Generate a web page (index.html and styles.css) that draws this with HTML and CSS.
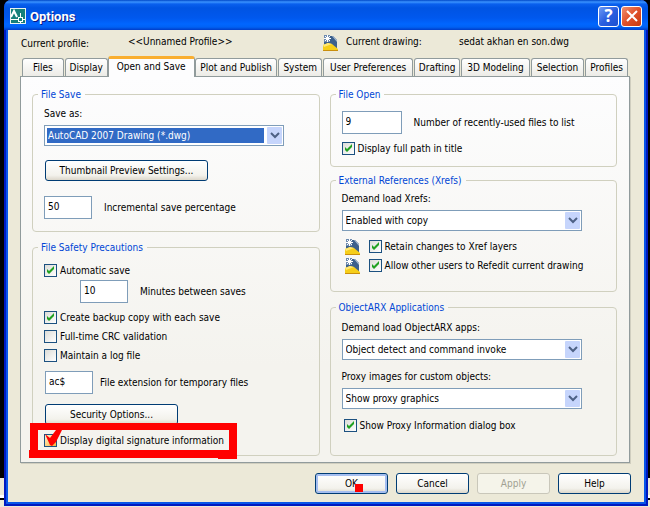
FILE: index.html
```html
<!DOCTYPE html>
<html lang="en">
<head>
<meta charset="utf-8">
<title>Options</title>
<link rel="stylesheet" href="styles.css">
</head>
<body>
<svg class="defs" aria-hidden="true">
  <symbol id="dwg" viewBox="0 0 16 16">
    <path d="M1 1H10L14 5V15H1Z" fill="#3c608c"/>
    <path d="M9 1H10L14 5V7Z" fill="#a9bbd0"/>
    <path d="M1 0H7V7H1Z" fill="#6d8bb0"/>
    <path d="M4.500 0V7M1 3.500H8M2 1L7 6M7 1L2 6" stroke="#fff" stroke-width="1" fill="none"/>
    <path d="M0 10L5 8L9 9L15 14V16H0Z" fill="#f6ce19"/>
    <path d="M0 10L5 8L9 9L1 12Z" fill="#ffe878"/>
    <path d="M0 15H15V16H0Z" fill="#c98e0c"/>
  </symbol>
</svg>
<main class="window">
  <header class="titlebar">
    <svg class="app-icon" viewBox="0 0 16 16" aria-hidden="true">
      <rect width="16" height="16" fill="#e8f2ef"/>
      <rect x="1" y="1" width="14" height="14" fill="#16807a"/>
      <path d="M1 9L4 3L7 9" stroke="#fff" stroke-width="2" fill="none"/>
      <path d="M1 11.5H15M10.500 5V15" stroke="#fff"/>
      <rect x="8.500" y="9.500" width="4" height="4" fill="#16807a" stroke="#fff"/>
    </svg>
    <h1>Options</h1>
    <button class="caption help" aria-label="Help">?</button>
    <button class="caption close" aria-label="Close"><svg viewBox="0 0 12 12"><path d="M1 1L11 11M11 1L1 11" stroke="#fff" stroke-width="2"/></svg></button>
  </header>
  <div class="info">
    <span class="profile-label">Current profile:</span>
    <span class="profile">&lt;&lt;Unnamed Profile&gt;&gt;</span>
    <svg class="dwg"><use href="#dwg"/></svg>
    <span class="drawing-label">Current drawing:</span>
    <span>sedat akhan en son.dwg</span>
  </div>
  <nav class="tabs" role="tablist">
    <button role="tab" class="t-files">Files</button>
    <button role="tab" class="t-display">Display</button>
    <button role="tab" class="t-open active" aria-selected="true">Open and Save</button>
    <button role="tab" class="t-plot">Plot and Publish</button>
    <button role="tab" class="t-system">System</button>
    <button role="tab" class="t-user">User Preferences</button>
    <button role="tab" class="t-draft">Drafting</button>
    <button role="tab" class="t-model">3D Modeling</button>
    <button role="tab" class="t-select">Selection</button>
    <button role="tab" class="t-profiles">Profiles</button>
  </nav>
  <section class="panel" role="tabpanel">
    <div class="column">
      <fieldset class="file-save">
        <legend>File Save</legend>
        <label for="format">Save as:</label>
        <select id="format" class="selected"><option>AutoCAD 2007 Drawing (*.dwg)</option></select>
        <button class="push thumbs">Thumbnail Preview Settings...</button>
        <div class="line"><input id="pct" type="text" value="50"><label for="pct">Incremental save percentage</label></div>
      </fieldset>
      <fieldset class="safety">
        <legend>File Safety Precautions</legend>
        <label class="check"><input type="checkbox" checked>Automatic save</label>
        <div class="line minutes"><input id="min" type="text" value="10"><label for="min">Minutes between saves</label></div>
        <label class="check backup"><input type="checkbox" checked>Create backup copy with each save</label>
        <label class="check"><input type="checkbox">Full-time CRC validation</label>
        <label class="check"><input type="checkbox">Maintain a log file</label>
        <div class="line ext"><input id="ext" type="text" value="ac$"><label for="ext">File extension for temporary files</label></div>
        <button class="push security">Security Options...</button>
        <label class="check signature"><input type="checkbox">Display digital signature information
          <svg class="marker" viewBox="0 0 210 38" aria-hidden="true">
            <path d="M2 1H209V37H190V36H1V28H2ZM10 8V28H201V8Z" fill="#f00" fill-rule="evenodd"/>
            <path d="M17 12L22 16L28 8H34L28 20L24 24L22 23Z" fill="#f00"/>
          </svg>
        </label>
      </fieldset>
    </div>
    <div class="column">
      <fieldset class="file-open">
        <legend>File Open</legend>
        <div class="line recent"><input id="recent" type="text" value="9"><label for="recent">Number of recently-used files to list</label></div>
        <label class="check"><input type="checkbox" checked>Display full path in title</label>
      </fieldset>
      <fieldset class="xrefs">
        <legend>External References (Xrefs)</legend>
        <label for="xref">Demand load Xrefs:</label>
        <select id="xref"><option>Enabled with copy</option></select>
        <div class="marked"><svg class="dwg"><use href="#dwg"/></svg><label class="check"><input type="checkbox" checked>Retain changes to Xref layers</label></div>
        <div class="marked"><svg class="dwg"><use href="#dwg"/></svg><label class="check"><input type="checkbox" checked>Allow other users to Refedit current drawing</label></div>
      </fieldset>
      <fieldset class="arx">
        <legend>ObjectARX Applications</legend>
        <label for="arx">Demand load ObjectARX apps:</label>
        <select id="arx"><option>Object detect and command invoke</option></select>
        <label for="proxy" class="proxy-label">Proxy images for custom objects:</label>
        <select id="proxy"><option>Show proxy graphics</option></select>
        <label class="check proxy-info"><input type="checkbox" checked>Show Proxy Information dialog box</label>
      </fieldset>
    </div>
  </section>
  <footer class="actions">
    <button class="push default">OK<span class="dot"></span></button>
    <button class="push">Cancel</button>
    <button class="push" disabled>Apply</button>
    <button class="push">Help</button>
  </footer>
</main>
</body>
</html>
```
FILE: styles.css
```css
* { box-sizing: border-box; }
html { background: #000; }
body {
  margin: 0;
  min-height: 100vh;
  padding: 0 2px 2px 4px;
  background: linear-gradient(#000 0 478px, #ece9d8 478px 495px, #fff 495px 498px, #000 498px 500px, #ece9d8 500px);
  font: 10px/14px "DejaVu Sans Condensed", "DejaVu Sans", sans-serif;
  color: #000;
}
button, input, select { font: inherit; color: inherit; margin: 0; }
.defs { position: absolute; width: 0; height: 0; }
.window {
  padding: 0 2px 2px;
  background: #ece9d8;
  border: 2px solid #0019c0;
  border-top: 0;
  box-shadow: inset 2px 0 #0855e8, inset -2px -2px #0855e8;
  border-radius: 7px 7px 0 0;
}
.titlebar {
  display: flex;
  align-items: center;
  gap: 2px;
  height: 30px;
  margin: 0 -4px;
  padding: 2px 6px 0 6px;
  border-radius: 7px 7px 0 0;
  background: linear-gradient(#0048c8, #3b93ff 2px, #0a60ee 4px, #0054e3 8px, #0058ee 18px, #0066ff 24px, #0062f5 27px, #003dc8);
}
.app-icon { width: 16px; height: 16px; }
h1 {
  flex: 1;
  margin: 0 0 0 2px;
  padding-top: 2px;
  font: bold 13px/18px Roboto, sans-serif;
  color: #fff;
  text-shadow: 1px 1px #0a1883;
}
.caption {
  display: flex;
  align-items: center;
  justify-content: center;
  width: 21px;
  height: 21px;
  padding: 0;
  border: 1px solid #fff;
  border-radius: 3px;
  color: #fff;
  font: bold 17px/18px "Open Sans", sans-serif;
}
.caption svg { width: 12px; height: 12px; }
.help { background: linear-gradient(135deg, #6d9bf5, #2a5fe0 50%, #1c50d0); }
.close { background: linear-gradient(135deg, #f09070, #e0502a 50%, #c83a10); }
.info { display: flex; height: 25px; padding: 5px 0 0 13px; }
.profile-label { width: 107px; padding-top: 2px; }
.profile { width: 195px; }
.dwg { width: 16px; height: 16px; }
.info .dwg { margin: 0 7px 0 0; }
.drawing-label { width: 113px; }
.tabs { display: flex; align-items: flex-end; height: 21px; padding-left: 14px; gap: 1px; margin-right: 16px; }
.tabs button {
  height: 18px;
  min-width: 0;
  padding: 0;
  border: 1px solid #919b9c;
  border-bottom: 0;
  border-radius: 3px 3px 0 0;
  background: linear-gradient(#fff, #ecebe6);
  white-space: nowrap;
  line-height: 17px;
}
.tabs .t-files { flex: 41 0 0; }
.tabs .t-display { flex: 42 0 0; }
.tabs .active {
  flex: 88 0 0;
  height: 21px;
  margin: 0 -1px -1px;
  padding-bottom: 3px;
  border-top: 3px solid #f9ae30;
  background: #fdfdfe;
  line-height: 14px;
  position: relative;
}
.tabs .t-plot { flex: 83 0 0; }
.tabs .t-system { flex: 43 0 0; }
.tabs .t-user { flex: 91 0 0; }
.tabs .t-draft { flex: 45 0 0; }
.tabs .t-model { flex: 69 0 0; }
.tabs .t-select { flex: 53 0 0; }
.tabs .t-profiles { flex: 42 0 0; }
.panel {
  display: grid;
  grid-template-columns: 1fr 1fr;
  gap: 10px;
  margin: 0 14px 0 12px;
  padding: 10px 12px 6px 11px;
  border: 1px solid #919b9c;
  box-shadow: 1px 1px #d0cebf;
  background: linear-gradient(#fdfdfe, #f4f3ee 75%);
}
.column { display: flex; flex-direction: column; min-width: 0; }
fieldset {
  display: flex;
  flex-direction: column;
  align-items: flex-start;
  min-width: 0;
  margin: 0;
  padding: 0 11px;
  border: 1px solid #d0d0bf;
  border-radius: 4px;
}
legend { height: 14px; margin-left: -6px; padding: 0 4px 0 3px; color: #0046d5; line-height: 16px; }
.file-save { height: 145px; }
.file-save > label { margin: 6px 0 4px; }
.safety { height: 216px; margin-top: 8px; }
.file-open { height: 80px; }
.xrefs { height: 119px; margin-top: 6px; }
.arx { height: 156px; margin-top: 8px; }
input[type="text"] {
  width: 48px;
  height: 23px;
  padding: 0 3px 2px;
  border: 1px solid #7f9db9;
  background: #fff;
}
select {
  appearance: none;
  width: 240px;
  max-width: 100%;
  height: 21px;
  padding: 0 20px 0 3px;
  border: 1px solid #7f9db9;
  border-radius: 0;
  background: url("data:image/svg+xml,%3Csvg xmlns='http://www.w3.org/2000/svg' width='17' height='19'%3E%3Crect x='1' y='1' width='15' height='17' rx='1' fill='%23c6d5fc'/%3E%3Cpath d='M5 7l4 4 4-4' fill='none' stroke='%234d6185' stroke-width='2'/%3E%3C/svg%3E") right center no-repeat, #fff;
}
.selected {
  color: #fff;
  background: url("data:image/svg+xml,%3Csvg xmlns='http://www.w3.org/2000/svg' width='17' height='19'%3E%3Crect x='1' y='1' width='15' height='17' rx='1' fill='%23c6d5fc'/%3E%3Cpath d='M5 7l4 4 4-4' fill='none' stroke='%234d6185' stroke-width='2'/%3E%3C/svg%3E") right center no-repeat, linear-gradient(#316ac5, #316ac5) 2px 2px / calc(100% - 21px) 15px no-repeat, #fff;
}
.push {
  height: 21px;
  padding: 0;
  border: 1px solid #003c74;
  border-radius: 3px;
  background: linear-gradient(#fff, #f3f2ec 75%, #dcd7cb);
}
.push:disabled { border-color: #c9c7ba; background: #f5f4ea; color: #a1a192; }
.thumbs { width: 163px; margin: 14px 0 15px 1px; }
.line { display: flex; align-items: center; gap: 12px; }
.line label { padding-top: 1px; }
.check { display: flex; align-items: center; gap: 3px; height: 19px; }
.check input {
  appearance: none;
  flex: none;
  width: 13px;
  height: 13px;
  border: 1px solid #1c5180;
  background: linear-gradient(135deg, #dcdcd7, #fff);
}
.check input:checked {
  background: url("data:image/svg+xml,%3Csvg xmlns='http://www.w3.org/2000/svg' width='11' height='11'%3E%3Cpath d='M2 4v3l2 2 5-5V1L4 6z' fill='%2321a121'/%3E%3C/svg%3E") center no-repeat, linear-gradient(135deg, #dcdcd7, #fff);
}
.safety > legend + .check { margin-top: 7px; }
.minutes { margin-left: 36px; }
.backup { margin-top: 5px; }
.ext { margin: 6px 0 10px 1px; gap: 7px; }
.security { width: 133px; margin-left: 1px; }
.signature { position: relative; margin-top: 6px; }
.signature input { background: linear-gradient(135deg, #fff0cf, #f9b43a); }
.marker { position: absolute; left: -16px; top: -9px; width: 210px; height: 38px; }
.recent { margin: 10px 0 5px; }
.recent input { width: 60px; }
.xrefs > label { margin: 5px 0 4px; }
.arx > legend + label { margin: 7px 0 4px; }
.marked { display: flex; align-items: center; gap: 8px; height: 19px; padding-left: 3px; }
.xrefs select { margin-bottom: 6px; }
.proxy-label { margin: 10px 0 4px; }
.proxy-info { margin: 7px 0 0 2px; }
.actions { display: flex; justify-content: flex-end; gap: 8px; padding: 10px 13px 8px; }
.actions .push { width: 73px; }
.actions .default { position: relative; box-shadow: inset 0 0 0 2px #a5bef0; }
.dot { position: absolute; left: 39px; top: 10px; width: 8px; height: 8px; background: #f00; }
```
